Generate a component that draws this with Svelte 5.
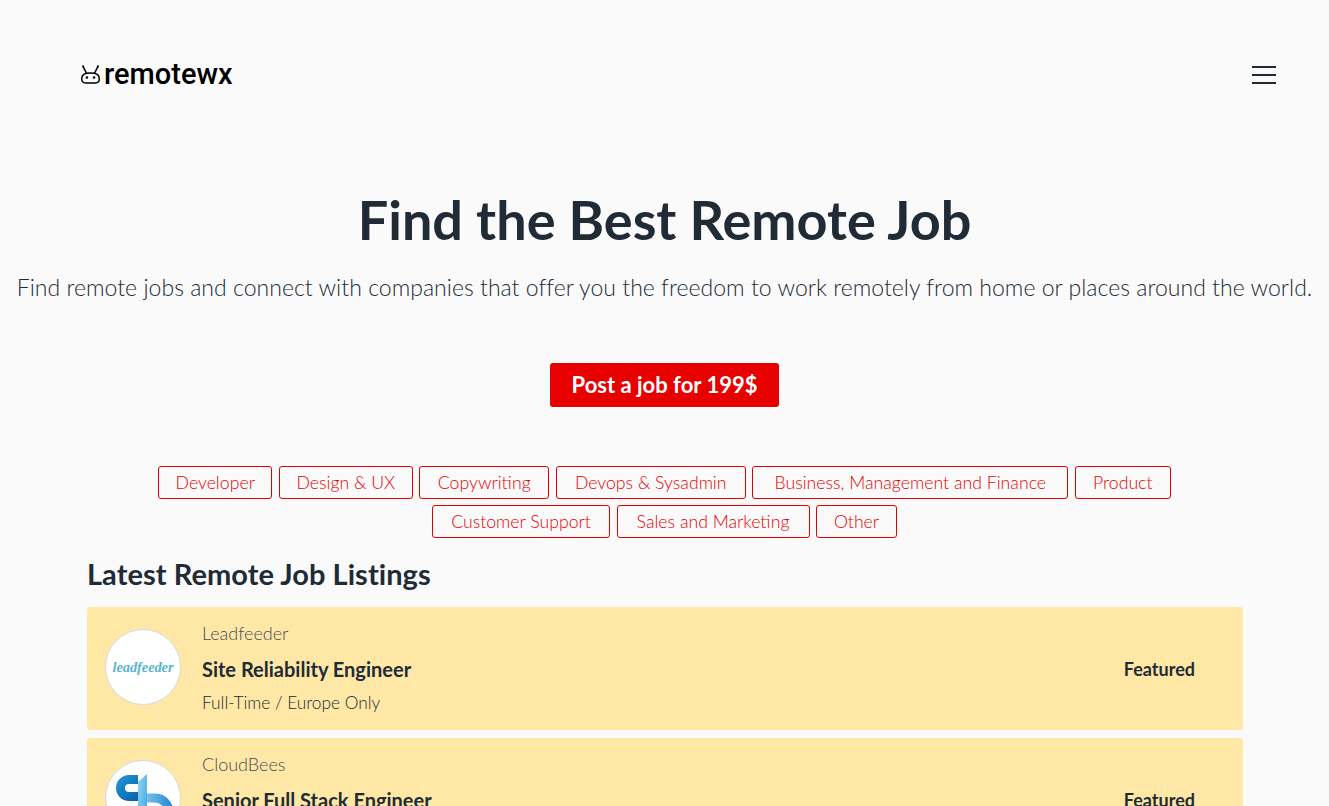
<script>
  const row1 = [
    { name: 'Developer', w: 114 }, { name: 'Design & UX', w: 134 }, { name: 'Copywriting', w: 130 },
    { name: 'Devops & Sysadmin', w: 190 }, { name: 'Business, Management and Finance', w: 316 }, { name: 'Product', w: 96 },
    { name: 'Customer Support', w: 178 }, { name: 'Sales and Marketing', w: 193 }, { name: 'Other', w: 81 }
  ];
  const jobs = [
    { company: 'Leadfeeder', title: 'Site Reliability Engineer', meta: 'Full-Time / Europe Only', logo: 'lf' },
    { company: 'CloudBees', title: 'Senior Full Stack Engineer', meta: 'Full-Time / USA Only', logo: 'cb' }
  ];
</script>

<div class="page">
  <header class="nav">
    <a class="brand" href="#top">
      <svg class="mark" viewBox="0 0 20 20" width="21" height="21" aria-hidden="true">
        <path d="M3 2.5 L6 8.5 M17 2.5 L14 8.5" fill="none" stroke="#000" stroke-width="1.4" stroke-linecap="round"/>
        <circle cx="3" cy="2.3" r="1" fill="#000"/>
        <circle cx="17" cy="2.3" r="1" fill="#000"/>
        <path d="M1.7 13.5 C1.7 10 5.5 8.6 10 8.6 C14.5 8.6 18.3 10 18.3 13.5 V14.8 C18.3 16.8 16.8 18 14.8 18 H5.2 C3.2 18 1.7 16.8 1.7 14.8 Z" fill="none" stroke="#000" stroke-width="1.4"/>
        <circle cx="6.6" cy="12.8" r="1.2" fill="#000"/>
        <circle cx="13.4" cy="12.8" r="1.2" fill="#000"/>
      </svg>
      <span>remotewx</span>
    </a>
    <button class="burger" aria-label="Menu"><i></i><i></i><i></i></button>
  </header>

  <section class="hero">
    <h1>Find the Best Remote Job</h1>
    <p>Find remote jobs and connect with companies that offer you the freedom to work remotely from home or places around the world.</p>
    <a class="cta" href="#post">Post a job for 199$</a>
  </section>

  <nav class="tags">
    {#each row1 as t}<a class="tag" href="#tag" style="width:{t.w}px">{t.name}</a>{/each}
  </nav>

  <main class="list">
    <h2>Latest Remote Job Listings</h2>
    {#each jobs as j}
      <article class="job">
        <div class="logo">
          {#if j.logo === 'lf'}
            <span class="lf">leadfeeder</span>
          {:else}
            <svg viewBox="0 0 76 76" width="76" height="76" aria-hidden="true">
              <defs>
                <linearGradient id="cbd" x1="0" y1="0" x2="1" y2="1">
                  <stop offset="0" stop-color="#1f8fd0"/>
                  <stop offset="1" stop-color="#0b62ac"/>
                </linearGradient>
                <linearGradient id="cbl" x1="0" y1="0" x2="1" y2="1">
                  <stop offset="0" stop-color="#8fd6f5"/>
                  <stop offset="1" stop-color="#3a9fdb"/>
                </linearGradient>
                <linearGradient id="cbb" x1="0" y1="0" x2="1" y2="0">
                  <stop offset="0" stop-color="#7cc9ef"/>
                  <stop offset="1" stop-color="#2f8fd2"/>
                </linearGradient>
              </defs>
              <path d="M33 19.5 H24 A8.5 8.5 0 0 0 24 36.5 H36" fill="none" stroke="url(#cbd)" stroke-width="9"/>
              <path d="M38 38 H50 A14 14 0 0 1 64 52 V70" fill="none" stroke="url(#cbb)" stroke-width="9"/>
              <path d="M33 22 L42 14 V72 H33 Z" fill="url(#cbl)"/>
            </svg>
          {/if}
        </div>
        <div class="info">
          <div class="company">{j.company}</div>
          <div class="title">{j.title}</div>
          <div class="meta">{j.meta}</div>
        </div>
        <div class="featured">Featured</div>
      </article>
    {/each}
  </main>
</div>

<style>
  :global(body) { margin: 0; background: #fafafa; overflow: hidden; }
  .page { height: 806px; overflow: hidden; font-family: "Lato", "Open Sans", sans-serif; color: #212b36; }
  .nav { display: flex; justify-content: space-between; align-items: center; padding: 57px 53px 0 80px; height: 36px; }
  .brand { display: flex; align-items: center; gap: 3px; margin-top: -2px; color: #000; text-decoration: none; font: 500 29px/36px Roboto, sans-serif; }
  .mark { display: block; margin-top: 1px; }
  .burger { width: 24px; height: 18px; padding: 0; border: 0; background: none; display: flex; flex-direction: column; justify-content: space-between; }
  .burger i { display: block; height: 2px; background: #212b36; }
  .hero { text-align: center; padding-top: 94px; }
  h1 { margin: 0; font-size: 54px; line-height: 66px; font-weight: 700; }
  .hero p { margin: 18px 0 0; font-size: 23px; line-height: 33px; font-weight: 300; white-space: nowrap; letter-spacing: 0.03px; }
  .cta { display: inline-block; margin-top: 59px; width: 229px; height: 44px; line-height: 44px; background: #e80000; color: #fff; border-radius: 3px; font-size: 22px; font-weight: 700; text-decoration: none; }
  .tags { display: flex; flex-wrap: wrap; justify-content: center; gap: 6px 6.5px; padding: 59px 150px 0; }
  .tag { box-sizing: border-box; height: 33px; line-height: 31px; text-align: center; border: 1px solid #e80000; border-radius: 3px; color: #e80000; font-size: 17.7px; font-weight: 300; text-decoration: none; white-space: nowrap; }
  .list { padding: 0 86px 0 87px; }
  h2 { margin: 19px 0 16px; font-size: 29px; line-height: 34px; font-weight: 700; letter-spacing: 0.05px; }
  .job { display: flex; align-items: flex-start; height: 123px; margin-bottom: 8px; padding: 0 48px 0 18px; background: #ffe8a6; border-radius: 3px; }
  .logo { width: 76px; height: 76px; margin-top: 22px; border-radius: 50%; background: #fff; border: 1px solid #d5d9dc; box-sizing: border-box; flex: none; display: flex; align-items: center; justify-content: center; overflow: hidden; }
  .logo svg { flex: none; margin: -1px; }
  .lf { font: italic 700 14.5px/1 "Liberation Serif", serif; color: #5ab5cf; letter-spacing: -0.1px; white-space: nowrap; }
  .info { margin: 14px 0 0 21px; flex: 1; }
  .company { font-size: 18px; line-height: 24px; font-weight: 300; color: #3f4d59; }
  .title { font-size: 20px; line-height: 28px; font-weight: 700; margin-top: 10px; }
  .meta { font-size: 17.3px; line-height: 24px; font-weight: 300; margin-top: 8px; }
  .featured { align-self: center; font-size: 18px; font-weight: 700; }
</style>
